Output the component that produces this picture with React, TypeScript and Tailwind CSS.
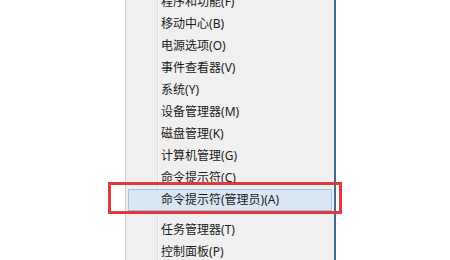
import React from "react";

type MenuItem = { label: string; key: string; separatorBefore?: boolean; active?: boolean };

const items: MenuItem[] = [
  { label: "程序和功能", key: "F" },
  { label: "移动中心", key: "B" },
  { label: "电源选项", key: "O" },
  { label: "事件查看器", key: "V" },
  { label: "系统", key: "Y" },
  { label: "设备管理器", key: "M" },
  { label: "磁盘管理", key: "K" },
  { label: "计算机管理", key: "G" },
  { label: "命令提示符", key: "C" },
  { label: "命令提示符(管理员)", key: "A", active: true },
  { label: "任务管理器", key: "T", separatorBefore: true },
  { label: "控制面板", key: "P" },
  { label: "文件资源管理器", key: "E" },
  { label: "搜索", key: "S" },
];

export default function App() {
  return (
    <div
      className="relative h-[260px] w-[450px] overflow-hidden bg-white text-[12px] text-[#1b1b1b]"
      style={{ fontFamily: '"Noto Sans", "Noto Sans CJK SC", sans-serif' }}
    >
      <div className="relative ml-[125px] -mt-[9px] w-[211px] border-l border-r-2 border-l-[#cfcfcf] border-r-[#44698f] bg-[#f0f0f0] px-[2px]">
        {/* icon gutter line */}
        <div className="absolute top-0 bottom-0 left-[31px] w-[2px] border-l border-l-[#dedede] bg-white/70" />
        {items.map((item) => (
          <React.Fragment key={item.key}>
            {item.separatorBefore && <div className="h-[8px]" />}
            <div
              className={
                item.active
                  ? "relative flex h-[22px] items-center border border-[#a3c2e3] bg-[#d6e4f4]/90 pl-[32px]"
                  : "relative flex h-[22px] items-center border border-transparent pl-[32px]"
              }
            >
              <span className="whitespace-nowrap leading-none">
                {item.label}({item.key})
              </span>
            </div>
          </React.Fragment>
        ))}
      </div>
      {/* red annotation box */}
      <div className="absolute left-[108px] top-[182px] h-[32px] w-[234px] border-[3px] border-[#de3b3b]" />
    </div>
  );
}
